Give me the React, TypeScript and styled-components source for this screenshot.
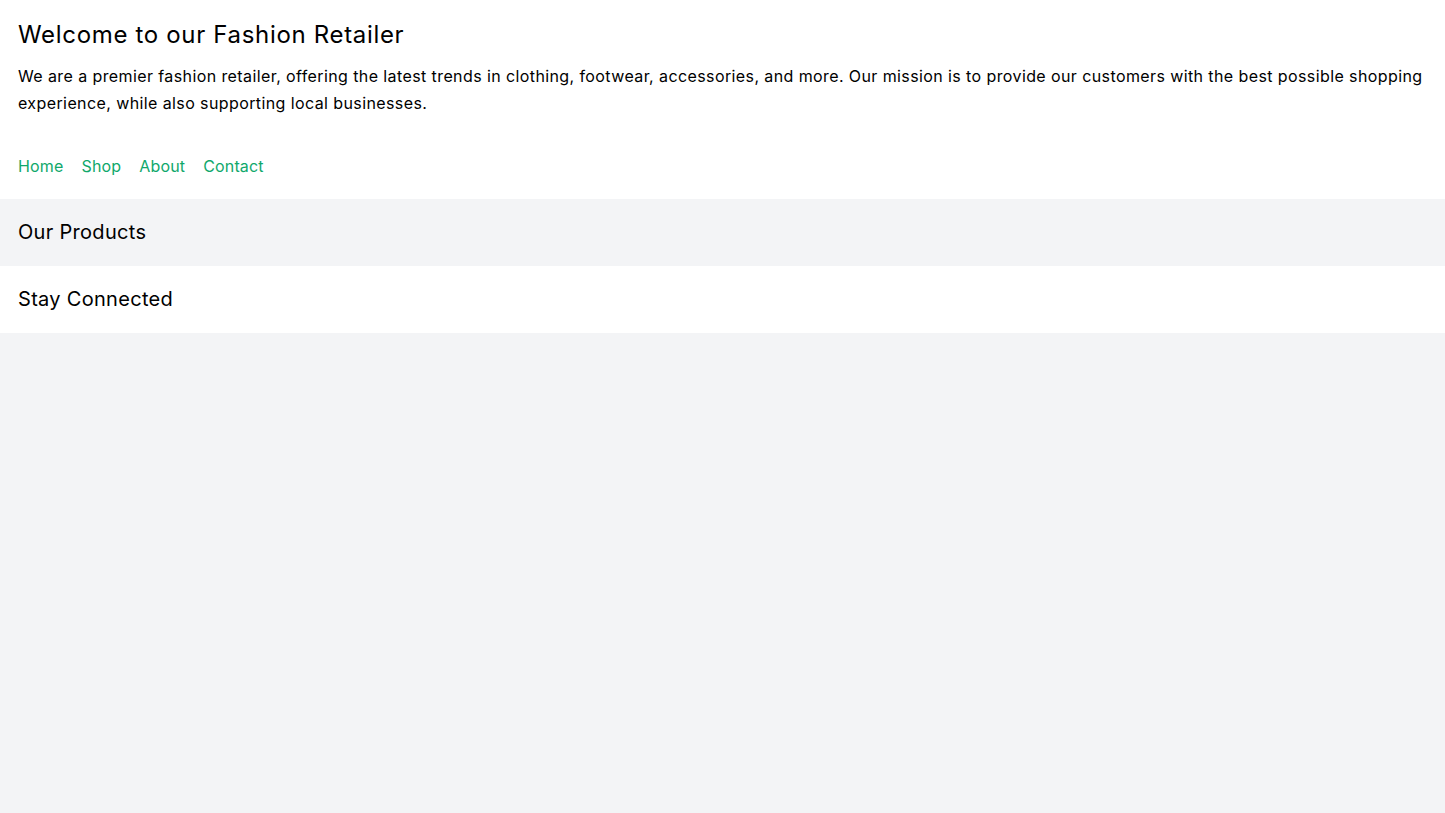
import styled, { createGlobalStyle } from "styled-components";

const GlobalStyle = createGlobalStyle`
  html, body {
    margin: 0;
    padding: 0;
    background-color: #f3f4f6;
    font-family: Inter, "Noto Sans", sans-serif;
    letter-spacing: 0.025em;
    color: #000;
  }
`

const Header = styled.header`
  background-color: #fff;
  padding: 19px 18px 0 18px;
`

const Titulo = styled.h1`
  margin: 0;
  font-size: 24px;
  font-weight: 400;
  line-height: 32px;
  letter-spacing: 0.028em;
`

const Descricao = styled.p`
  margin: 12px 0 0 0;
  font-size: 16px;
  line-height: 27px;
`

const Nav = styled.nav`
  display: flex;
  gap: 18px;
  padding: 36px 0 19px 0;
`

const LinkNav = styled.a`
  color: #10a86b;
  text-decoration: none;
  font-size: 16px;
  line-height: 27px;
  letter-spacing: 0.01em;
`

const Secao = styled.section<{ $fundo: string }>`
  background-color: ${(props) => props.$fundo};
  padding: 20px 18px;
`

const TituloSecao = styled.h2`
  margin: 0;
  font-size: 20px;
  font-weight: 400;
  line-height: 27px;
  letter-spacing: 0.015em;
`

export default function App() {
  const links = ["Home", "Shop", "About", "Contact"];

  return (
    <>
      <GlobalStyle />
      <Header>
        <Titulo>Welcome to our Fashion Retailer</Titulo>
        <Descricao>
          We are a premier fashion retailer, offering the latest trends in clothing, footwear, accessories, and more. Our mission is to provide our customers with the best possible shopping experience, while also supporting local businesses.
        </Descricao>
        <Nav>
          {links.map((link) => (
            <LinkNav key={link} href="#">{link}</LinkNav>
          ))}
        </Nav>
      </Header>
      <Secao $fundo="#f3f4f6">
        <TituloSecao>Our Products</TituloSecao>
      </Secao>
      <Secao $fundo="#fff">
        <TituloSecao>Stay Connected</TituloSecao>
      </Secao>
    </>
  )
}
